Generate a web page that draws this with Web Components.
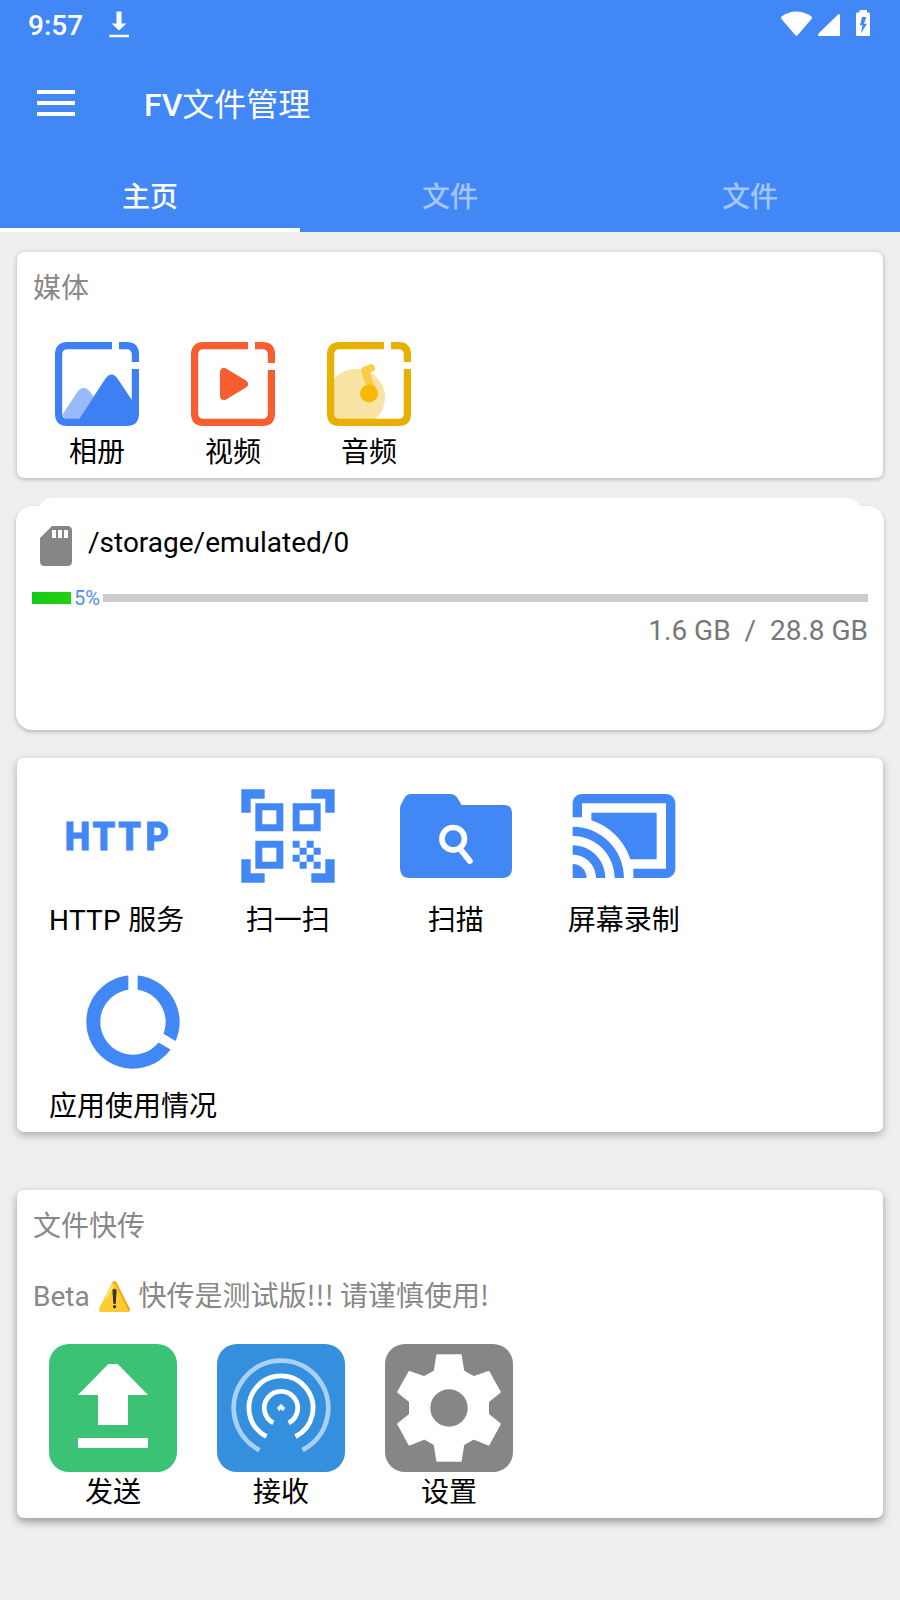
<!DOCTYPE html>
<html lang="zh-CN">
<head>
<meta charset="utf-8">
<title>FV文件管理</title>
<style>
    body {
        margin: 0;
        min-height: 1600px;
        background: #efefef;
        font-family: Roboto, "Noto Sans CJK SC", sans-serif;
        font-size: 28px;
        line-height: 40px;
        color: #000;
    }
    main {
        display: flex;
        flex-direction: column;
        padding: 20px 17px 82px;
    }
    svg {
        display: block;
    }
    .media {
        height: 226px;
        --shadow: 0 1px 5px rgba(0, 0, 0, .28);
    }
    .tools {
        height: 374px;
        margin-top: 28px;
        --shadow: 0 3px 8px rgba(0, 0, 0, .3);
    }
    .transfer {
        height: 328px;
        margin-top: 58px;
        --shadow: 0 4px 8px rgba(0, 0, 0, .36);
    }
    .row {
        display: flex;
    }
    .media .row {
        gap: 52px;
        padding: 33px 38px 0;
        --gap: 7px;
    }
    .tools .row {
        padding: 22px 32px 0;
        height: 164px;
        gap: 56px;
        --gap: 9px;
    }
    .tools tile-item:first-child {
        margin-right: -8.5px;
    }
    .tools .latin {
        letter-spacing: .3px;
    }
    .transfer .row {
        gap: 40px;
        padding: 30px 32px 0;
        --gap: 1px;
    }
    .note {
        padding: 27px 16px 0;
        height: 40px;
        color: #888;
    }
    .note .cjk {
        font-family: "Noto Sans CJK SC", sans-serif;
    }
</style>
</head>
<body>
<app-header>
    <status-bar slot="status">9:57</status-bar>
    <span slot="latin">FV</span>
    <span slot="name">文件管理</span>
    <tab-item slot="tabs" active>主页</tab-item>
    <tab-item slot="tabs">文件</tab-item>
    <tab-item slot="tabs">文件</tab-item>
</app-header>
<main>
    <info-card class="media">
        <span slot="title">媒体</span>
        <div class="row">
            <tile-item>
                <svg slot="icon" width="84" height="84" viewBox="0 0 84 84">
                    <path d="M7.3 73 22.6 49.4Q28.7 42 34.800 49.400L38.500 54.700 24 77H11Z" fill="#98baf9"/>
                    <path d="M24 77 50.500 36.500Q56.500 28.500 62.500 36.500L77 58.300V78H24Z" fill="#3e80f4"/>
                    <path d="M57 3.600H12.500Q3.600 3.600 3.600 12.500V71.500Q3.600 80.400 12.500 80.400H71.500Q80.400 80.400 80.400 71.500V27M64 3.600H71.500Q80.400 3.600 80.400 12.500V20" fill="none" stroke="#3e80f4" stroke-width="7.200"/>
                </svg>
                相册
            </tile-item>
            <tile-item>
                <svg slot="icon" width="84" height="84" viewBox="0 0 84 84">
                    <path d="M57 3.600H12.500Q3.600 3.600 3.600 12.500V71.500Q3.600 80.400 12.500 80.400H71.500Q80.400 80.400 80.400 71.500V28M64 3.600H71.500Q80.400 3.600 80.400 12.500V21" fill="none" stroke="#f65e31" stroke-width="7.200"/>
                    <path d="M33 30V54L53 42Z" fill="#f65e31" stroke="#f65e31" stroke-width="8" stroke-linejoin="round"/>
                </svg>
                视频
            </tile-item>
            <tile-item>
                <svg slot="icon" width="84" height="84" viewBox="0 0 84 84">
                    <path d="M7 37A28.700 28.700 0 0 1 30 27A28.700 28.700 0 0 1 48.500 77H7Z" fill="#f8e3a4"/>
                    <path d="M44.500 47 38 28.500 44 26" fill="none" stroke="#f9cd46" stroke-width="7.800" stroke-linecap="round" stroke-linejoin="round"/>
                    <circle cx="42" cy="51.500" r="9" fill="#f6b900"/>
                    <path d="M57 3.600H12.500Q3.600 3.600 3.600 12.500V71.500Q3.600 80.400 12.500 80.400H71.500Q80.400 80.400 80.400 71.500V27M64 3.600H71.500Q80.400 3.600 80.400 12.500V20" fill="none" stroke="#e8b000" stroke-width="7.200"/>
                </svg>
                音频
            </tile-item>
        </div>
    </info-card>

    <storage-card percent="5">
        <span slot="path">/storage/emulated/0</span>
        <span slot="usage">1.6 GB&nbsp; / &nbsp;28.8 GB</span>
    </storage-card>

    <info-card class="tools">
        <div class="row">
            <tile-item>
                <svg slot="icon" width="112" height="112" viewBox="0 0 112 112">
                    <text transform="scale(.94 1)" x="17.400 45.700 73.100 102.300" y="69.700" text-anchor="middle" font-family="Roboto" font-weight="900" font-size="38.400" fill="#4287f6" stroke="#4287f6" stroke-width=".8">HTTP</text>
                </svg>
                <span class="latin">HTTP </span>服务
            </tile-item>
            <tile-item>
                <svg slot="icon" width="112" height="112" viewBox="0 0 24 24" fill="#4287f6">
                    <path d="M9.500 6.500v3h-3v-3h3M11 5H5v6h6V5zm-1.500 9.500v3h-3v-3h3M11 13H5v6h6v-6zm6.500-6.500v3h-3v-3h3M19 5h-6v6h6V5zm-6 8h1.500v1.500H13V13zm1.500 1.500H16V16h-1.500v-1.500zM16 13h1.500v1.500H16V13zm-3 3h1.500v1.500H13V16zm1.500 1.500H16V19h-1.500v-1.500zM16 16h1.500v1.500H16V16zm1.500-1.500H19V16h-1.500v-1.500zm0 3H19V19h-1.500v-1.500zM22 7h-2V4h-3V2h5v5zm0 15v-5h-2v3h-3v2h5zM2 22h5v-2H4v-3H2v5zM2 2v5h2V4h3V2H2z"/>
                </svg>
                扫一扫
            </tile-item>
            <tile-item>
                <svg slot="icon" width="112" height="112" viewBox="0 0 112 112">
                    <path d="M0 29Q0 25.500 1.700 23L5 17Q7 14 11 14H50Q55 14 57.500 18L61.500 25H104Q112 25 112 33V88Q112 98 102 98H10Q0 98 0 88Z" fill="#4287f6"/>
                    <circle cx="53.200" cy="58.800" r="11.300" fill="none" stroke="#fff" stroke-width="5.600"/>
                    <path d="M61 70 69.800 81" fill="none" stroke="#fff" stroke-width="6" stroke-linecap="round"/>
                </svg>
                扫描
            </tile-item>
            <tile-item>
                <svg slot="icon" width="112" height="112" viewBox="0 0 24 24" fill="#4287f6">
                    <path d="M1 18v3h3c0-1.660-1.340-3-3-3zm0-4v2c2.760 0 5 2.240 5 5h2c0-3.870-3.130-7-7-7zm18-7H5v1.630c3.960 1.280 7.090 4.410 8.370 8.370H19V7zM1 10v2c4.970 0 9 4.030 9 9h2c0-6.080-4.930-11-11-11zm20-7H3c-1.100 0-2 .9-2 2v3h2V5h18v14h-7v2h7c1.100 0 2-.9 2-2V5c0-1.100-.9-2-2-2z"/>
                </svg>
                屏幕录制
            </tile-item>
        </div>
        <div class="row">
            <tile-item>
                <svg slot="icon" width="112" height="112" viewBox="0 0 24 24" fill="#4287f6">
                    <path d="M13 2.050v3.030c3.390.49 6 3.390 6 6.920 0 .9-.18 1.750-.48 2.540l2.600 1.530c.56-1.240.88-2.620.88-4.070 0-5.180-3.950-9.450-9-9.950zM12 19c-3.870 0-7-3.130-7-7 0-3.530 2.610-6.430 6-6.920V2.050c-5.060.5-9 4.760-9 9.950 0 5.520 4.470 10 9.990 10 3.310 0 6.240-1.610 8.060-4.090l-2.600-1.530C16.170 17.980 14.210 19 12 19z"/>
                </svg>
                应用使用情况
            </tile-item>
        </div>
    </info-card>

    <info-card class="transfer">
        <span slot="title">文件快传</span>
        <div class="note">Beta ⚠️ <span class="cjk">快传是测试版!!! 请谨慎使用!</span></div>
        <div class="row">
            <tile-item>
                <svg slot="icon" width="128" height="128" viewBox="0 0 128 128">
                    <rect width="128" height="128" rx="20" fill="#3bc275"/>
                    <path d="M59.300 20H68.700L99 51H79V81H49V51H29ZM29 94H99V104H29Z" fill="#fff"/>
                </svg>
                发送
            </tile-item>
            <tile-item>
                <svg slot="icon" width="128" height="128" viewBox="0 0 128 128">
                    <rect width="128" height="128" rx="20" fill="#348fde"/>
                    <g fill="none" stroke="#fff" stroke-width="4.800">
                        <path d="M42.500 106.100A47.300 47.300 0 1 1 85.500 106.100" stroke="#aad1f3"/>
                        <path d="M49.500 92.500A32 32 0 1 1 78.500 92.500"/>
                        <path d="M56.400 78.900A16.700 16.700 0 1 1 71.600 78.900"/>
                    </g>
                    <path d="M59.800 64 64 60 68.200 64 65.600 67.300 64 64.800 62.400 67.300Z" fill="#fff"/>
                </svg>
                接收
            </tile-item>
            <tile-item>
                <svg slot="icon" width="128" height="128" viewBox="0 0 128 128">
                    <rect width="128" height="128" rx="20" fill="#868686"/>
                    <path d="M52.300 11.300H75.700L78.300 27.300 88.700 33.200 103.600 27.900 114.800 48 103 57.500V70.500L114.800 80 103.600 100.500 88.700 94.500 78.300 100.500 75.700 116.700H52.300L49.700 100.500 39.300 94.500 24.400 100.500 13.200 80 25 70.500V57.500L13.200 48 24.400 27.900 39.300 33.200 49.700 27.300Z" fill="#fff" stroke="#fff" stroke-width="2" stroke-linejoin="round"/>
                    <circle cx="64" cy="64" r="18.700" fill="#868686"/>
                </svg>
                设置
            </tile-item>
        </div>
    </info-card>
</main>

<script>
(function () {
    function define(name, html) {
        const template = document.createElement('template');
        template.innerHTML = html;
        window.customElements.define(name, class extends HTMLElement {
            constructor() {
                super();
                this.attachShadow({ mode: 'open' }).appendChild(template.content.cloneNode(true));
            }
        });
    }

    define('status-bar', `
        <style>
            :host {
                display: flex;
                align-items: center;
                height: 48px;
                padding: 0 30px 0 28px;
                font-weight: 500;
                font-size: 28px;
            }
            .time { width: 80px; padding-top: 3px; }
            .spacer { flex: 1; }
            svg { display: block; }
        </style>
        <div class="time"><slot></slot></div>
        <svg width="22" height="48" viewBox="0 0 22 48" fill="#fff">
            <path d="M8.500 11.500h5v12h5L11 30.500 3.500 23.500h5zM1.300 34.800h19.700v2.500H1.300z"/>
        </svg>
        <div class="spacer"></div>
        <svg width="90" height="48" viewBox="780 0 90 48" fill="#fff">
            <path d="M781.500 16.500Q789 11.500 796.500 11.500T811.500 16.500Q812.500 17.500 811.500 19L797.800 35Q796.500 36.500 795.200 35L781.500 19Q780.500 17.500 781.500 16.500Z"/>
            <path d="M840 14.500V36H818.500Q817.500 35 818.500 33.500L838 14.500Q839 13.500 840 14.500Z"/>
            <path fill-rule="evenodd" d="M859.500 10h7.500v2.500h2Q870 12.500 870 14V35Q870 36 869 36H857Q856 36 856 35V14Q856 12.500 857 12.500h2.500zM862 17 860 25.300h2.400L861 33.300 867 23.700h-3L866.300 17z"/>
        </svg>
    `);

    define('app-header', `
        <style>
            :host {
                display: block;
                height: 232px;
                background: #4187f6;
                color: #fff;
            }
            .toolbar {
                display: flex;
                align-items: center;
                height: 110px;
                padding-left: 37px;
            }
            .menu {
                display: flex;
                flex-direction: column;
                gap: 7px;
                width: 38px;
                margin-right: 69px;
            }
            .menu i { height: 4px; background: #fff; }
            .title { font-size: 32px; padding-top: 4px; }
            .title b { font-weight: 500; }
            .tabs { display: flex; }
        </style>
        <slot name="status"></slot>
        <div class="toolbar">
            <div class="menu"><i></i><i></i><i></i></div>
            <div class="title"><b><slot name="latin"></slot></b><slot name="name"></slot></div>
        </div>
        <div class="tabs"><slot name="tabs"></slot></div>
    `);

    define('tab-item', `
        <style>
            :host {
                flex: 1;
                box-sizing: border-box;
                height: 74px;
                padding-top: 20px;
                text-align: center;
                font-weight: 500;
                color: #a4c5fb;
                border-bottom: 4px solid transparent;
            }
            :host([active]) {
                color: #fff;
                border-bottom-color: #fff;
            }
        </style>
        <slot></slot>
    `);

    define('info-card', `
        <style>
            :host {
                display: block;
                box-sizing: border-box;
                background: #fff;
                border-radius: 7px;
                box-shadow: var(--shadow);
            }
            slot[name=title]::slotted(*) {
                display: block;
                padding: 17px 16px 0;
                color: #888;
            }
        </style>
        <slot name="title"></slot>
        <slot></slot>
    `);

    define('tile-item', `
        <style>
            :host {
                display: flex;
                flex-direction: column;
                align-items: center;
                white-space: nowrap;
            }
            .label { margin-top: var(--gap, 0px); }
        </style>
        <slot name="icon"></slot>
        <div class="label"><slot></slot></div>
    `);

    define('storage-card', `
        <style>
            :host {
                display: block;
                position: relative;
                box-sizing: border-box;
                height: 224px;
                margin: 28px -1px 0;
                padding: 16px 16px 0;
                background: #fff;
                border-radius: 16px;
                box-shadow: 0 2px 4px rgba(0, 0, 0, .24);
            }
            /* second card peeking out from behind the top edge */
            :host::before {
                content: '';
                position: absolute;
                left: 21px;
                right: 22px;
                top: -8px;
                height: 30px;
                background: #fff;
                border-radius: 16px 16px 0 0;
            }
            .path, .bar, .usage { position: relative; }
            .path {
                display: flex;
                gap: 8px;
                height: 48px;
            }
            .path div { margin-top: 1px; }
            .bar {
                display: flex;
                align-items: center;
                height: 20px;
                margin-top: 18px;
                font-size: 20px;
                line-height: 20px;
                color: #4a90f0;
            }
            .fill { height: 12px; background: linear-gradient(90deg, #15cb18, #23d00f); }
            .rest { flex: 1; height: 8px; background: #ccc; }
            .value { padding: 0 3px; }
            .usage { text-align: right; color: #777; margin-top: 3px; }
        </style>
        <div class="path">
            <svg width="48" height="48" viewBox="0 0 24 24" fill="#868686">
                <path d="M18 2h-8L4 8v12c0 1.100.9 2 2 2h12c1.100 0 2-.9 2-2V4c0-1.100-.9-2-2-2zm-6 6h-2V4h2v4zm3 0h-2V4h2v4zm3 0h-2V4h2v4z"/>
            </svg>
            <div><slot name="path"></slot></div>
        </div>
        <div class="bar">
            <div class="fill"></div>
            <div class="value"></div>
            <div class="rest"></div>
        </div>
        <div class="usage"><slot name="usage"></slot></div>
    `);

    // the filled part is measured against the bar without its label
    document.querySelectorAll('storage-card').forEach(card => {
        const percent = card.getAttribute('percent');
        card.shadowRoot.querySelector('.value').textContent = percent + '%';
        card.shadowRoot.querySelector('.fill').style.width = (836 - 56) * percent / 100 + 'px';
    });
})();
</script>
</body>
</html>
